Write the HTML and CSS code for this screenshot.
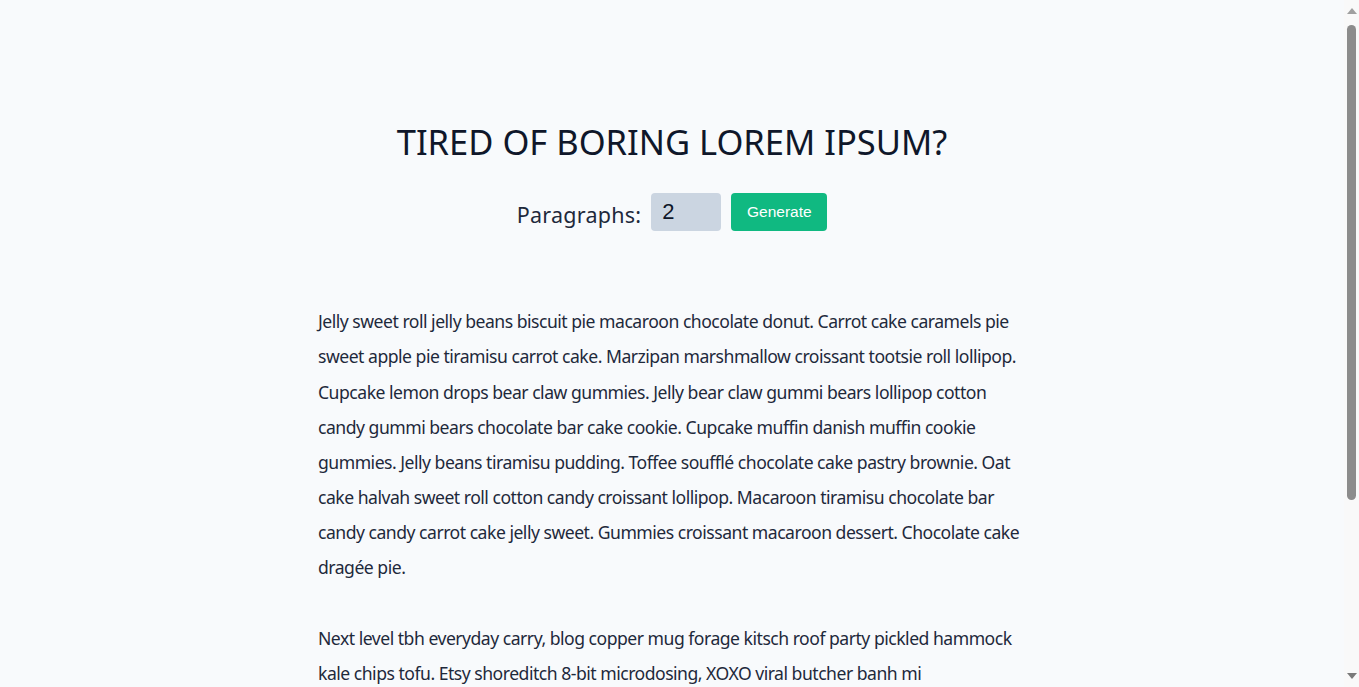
FILE: index.html
```html
<!DOCTYPE html>
<html lang="en">
<head>
<meta charset="utf-8">
<title>Lorem Ipsum</title>
<link rel="stylesheet" href="styles.css">
</head>
<body>
<main class="page">
  <section class="section">
    <h3 class="title">Tired of boring lorem ipsum?</h3>
    <form class="lorem-form">
      <label class="label" for="amount">Paragraphs:</label>
      <input class="amount" type="number" id="amount" value="2">
      <button class="btn" type="button">Generate</button>
    </form>
    <article class="lorem-text">
      <p>Jelly sweet roll jelly beans biscuit pie macaroon chocolate donut. Carrot cake caramels pie sweet apple pie tiramisu carrot cake. Marzipan marshmallow croissant tootsie roll lollipop. Cupcake lemon drops bear claw gummies. Jelly bear claw gummi bears lollipop cotton candy gummi bears chocolate bar cake cookie. Cupcake muffin danish muffin cookie gummies. Jelly beans tiramisu pudding. Toffee soufflé chocolate cake pastry brownie. Oat cake halvah sweet roll cotton candy croissant lollipop. Macaroon tiramisu chocolate bar candy candy carrot cake jelly sweet. Gummies croissant macaroon dessert. Chocolate cake dragée pie.</p>
      <p>Next level tbh everyday carry, blog copper mug forage kitsch roof party pickled hammock kale chips tofu. Etsy shoreditch 8-bit microdosing, XOXO viral butcher banh mi humblebrag&nbsp;listicle woke bicycle rights brunch before they sold out ramps. Twee shabby chic taiyaki flannel, enamel pin venmo vape four loko. Hexagon kale chips typewriter kitsch 8-bit organic plaid small batch keffiyeh ethical narwhal echo park cronut.</p>
    </article>
  </section>
</main>
<aside class="scrollbar" aria-hidden="true">
  <span class="arrow arrow-up"></span>
  <span class="thumb"></span>
  <span class="arrow arrow-down"></span>
</aside>
</body>
</html>
```
FILE: styles.css
```css
* { box-sizing: border-box; }
body {
  margin: 0;
  background: #f8fafc;
  color: #0f172a;
  font-family: "Noto Sans", "Open Sans", sans-serif;
}
.page {
  margin-right: 15px;
}
.section {
  width: 708px;
  margin: 0 auto;
  padding: 120px 0 60px;
  text-align: center;
}
.title {
  margin: 0;
  font-size: 34.5px;
  font-weight: 400;
  text-transform: uppercase;
  line-height: 1.25;
}
.lorem-form {
  display: flex;
  justify-content: center;
  align-items: center;
  gap: 10px;
  margin-top: 30px;
}
.label {
  font-size: 21.5px;
  letter-spacing: 0.25px;
  color: #1e293b;
  margin-top: 5px;
}
.amount {
  width: 70px;
  height: 38px;
  border: none;
  border-radius: 4px;
  background: #cbd5e1;
  padding: 0 11px;
  font-family: "Liberation Sans", Arial, sans-serif;
  font-size: 22px;
  color: #0f172a;
}
.btn {
  width: 96px;
  height: 38px;
  border: none;
  border-radius: 4px;
  background: #10b981;
  color: #ffffff;
  font-family: "Liberation Sans", Arial, sans-serif;
  font-size: 15.5px;
  cursor: pointer;
}
.lorem-text {
  margin-top: 73px;
  text-align: left;
}
.lorem-text p {
  margin: 0 0 2em;
  font-size: 17.6px;
  line-height: 2;
  letter-spacing: -0.5px;
  color: #1e293b;
}
.scrollbar {
  position: fixed;
  top: 0;
  right: 0;
  width: 15px;
  height: 100vh;
  background: #f9f9f9;
  display: flex;
  flex-direction: column;
  align-items: center;
}
.arrow {
  width: 0;
  height: 0;
  border-left: 5px solid transparent;
  border-right: 5px solid transparent;
}
.arrow-up {
  margin-top: 8px;
  border-bottom: 6px solid #a0a0a0;
}
.arrow-down {
  margin-top: auto;
  margin-bottom: 8px;
  border-top: 6px solid #7a7a7a;
}
.thumb {
  margin-top: 11px;
  width: 9px;
  height: 475px;
  border-radius: 5px;
  background: #8c8c8c;
}
```
